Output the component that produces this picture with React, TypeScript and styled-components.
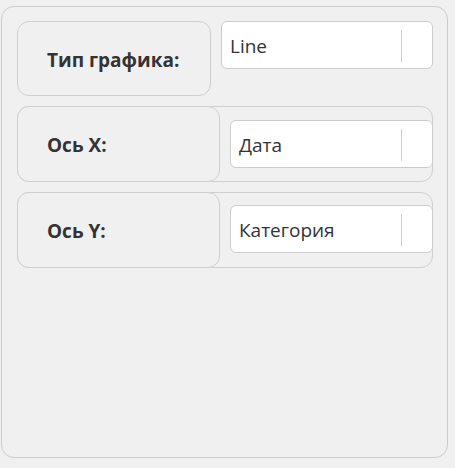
import React from "react";
import styled, { createGlobalStyle } from "styled-components";

const GlobalStyle = createGlobalStyle`
  html, body {
    margin: 0;
    padding: 0;
    background: #f0f0f0;
  }
  body {
    font-family: "Open Sans", "Noto Sans", sans-serif;
  }
`;

const Panel = styled.div`
  box-sizing: border-box;
  margin: 6px 0 0 1px;
  width: 447px;
  height: 452px;
  border: 1px solid #cccccc;
  border-radius: 13px;
  background: #f0f0f0;
  padding: 14px 14px 0 15px;
  display: flex;
  flex-direction: column;
  gap: 10px;
`;

const Row = styled.div<{ $framed?: boolean }>`
  box-sizing: border-box;
  display: flex;
  align-items: flex-start;
  height: ${(p) => (p.$framed ? "76px" : "75px")};
  border: ${(p) => (p.$framed ? "1px solid #cfcfcf" : "1px solid transparent")};
  border-radius: 12px;
`;

const LabelBox = styled.div<{ $w: number }>`
  box-sizing: border-box;
  width: ${(p) => p.$w}px;
  height: calc(100% + 2px);
  margin: -1px 0 -1px -1px;
  border: 1px solid #cfcfcf;
  border-radius: 12px;
  background: #f0f0f0;
  display: flex;
  align-items: center;
  padding: 2px 0 0 29px;
  font-size: 19px;
  font-weight: 700;
  color: #333333;
`;

const Select = styled.div<{ $top: number }>`
  box-sizing: border-box;
  position: relative;
  flex: 1;
  height: 48px;
  margin: ${(p) => p.$top}px -1px 0 10px;
  border: 1px solid #cccccc;
  border-radius: 6px;
  background: #ffffff;
  display: flex;
  align-items: center;
  padding: 1px 0 0 8px;
  font-size: 19px;
  color: #333333;
`;

const Divider = styled.span`
  position: absolute;
  right: 30px;
  top: 8px;
  width: 1px;
  height: 32px;
  background: #cccccc;
`;

export default function App() {
  return (
    <>
      <GlobalStyle />
      <Panel>
        <Row>
          <LabelBox $w={194}>Тип графика:</LabelBox>
          <Select $top={-1}>
            Line
            <Divider />
          </Select>
        </Row>
        <Row $framed>
          <LabelBox $w={203}>Ось X:</LabelBox>
          <Select $top={13}>
            Дата
            <Divider />
          </Select>
        </Row>
        <Row $framed>
          <LabelBox $w={203}>Ось Y:</LabelBox>
          <Select $top={12}>
            Категория
            <Divider />
          </Select>
        </Row>
      </Panel>
    </>
  );
}
